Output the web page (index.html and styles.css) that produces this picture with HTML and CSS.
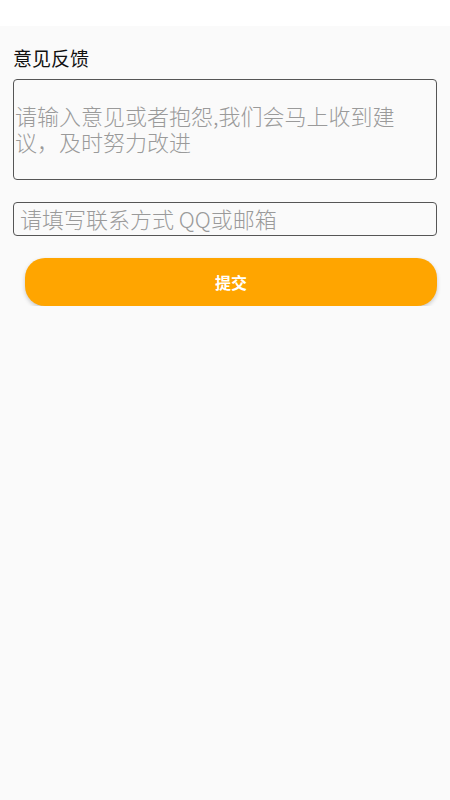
FILE: index.html
```html
<!DOCTYPE html>
<html lang="zh-CN">
<head>
<meta charset="utf-8">
<title>意见反馈</title>
<link rel="stylesheet" href="styles.css">
</head>
<body>
<div class="statusbar"></div>
<main class="content">
  <div class="title">意见反馈</div>
  <textarea class="feedback" placeholder="请输入意见或者抱怨,我们会马上收到建议，及时努力改进"></textarea>
  <input class="contact" type="text" placeholder="请填写联系方式 QQ或邮箱">
  <button class="submit" type="button">提交</button>
</main>
</body>
</html>
```
FILE: styles.css
```css
html, body {
  margin: 0;
  padding: 0;
  background: #fafafa;
  font-family: "Noto Sans CJK SC", "Noto Sans", sans-serif;
}
.statusbar {
  height: 26px;
  background: #ffffff;
}
.content {
  display: flex;
  flex-direction: column;
  padding: 0 13px;
}
.title {
  margin-top: 18px;
  font-size: 19px;
  line-height: 27px;
  color: #111;
}
.feedback {
  margin-top: 8px;
  box-sizing: border-box;
  width: 100%;
  height: 101px;
  border: 1px solid #555;
  border-radius: 4px;
  background: transparent;
  padding: 22px 32px 0 1px;
  font-family: inherit;
  font-size: 22px;
  font-weight: 300;
  line-height: 26px;
  color: #333;
  resize: none;
  outline: none;
  overflow: hidden;
}
.contact {
  margin-top: 22px;
  box-sizing: border-box;
  width: 100%;
  height: 34px;
  border: 1px solid #555;
  border-radius: 4px;
  background: transparent;
  padding: 0 6px 2px;
  font-family: inherit;
  font-size: 22px;
  font-weight: 300;
  color: #333;
  outline: none;
}
.feedback::placeholder,
.contact::placeholder {
  color: #9a9a9a;
  opacity: 1;
}
.submit {
  margin: 22px 0 0 12px;
  height: 48px;
  border: none;
  border-radius: 20px;
  background: #ffa500;
  color: #fff;
  font-family: inherit;
  font-size: 16px;
  font-weight: bold;
  box-shadow: 0 2px 4px rgba(0, 0, 0, 0.2);
}
```
